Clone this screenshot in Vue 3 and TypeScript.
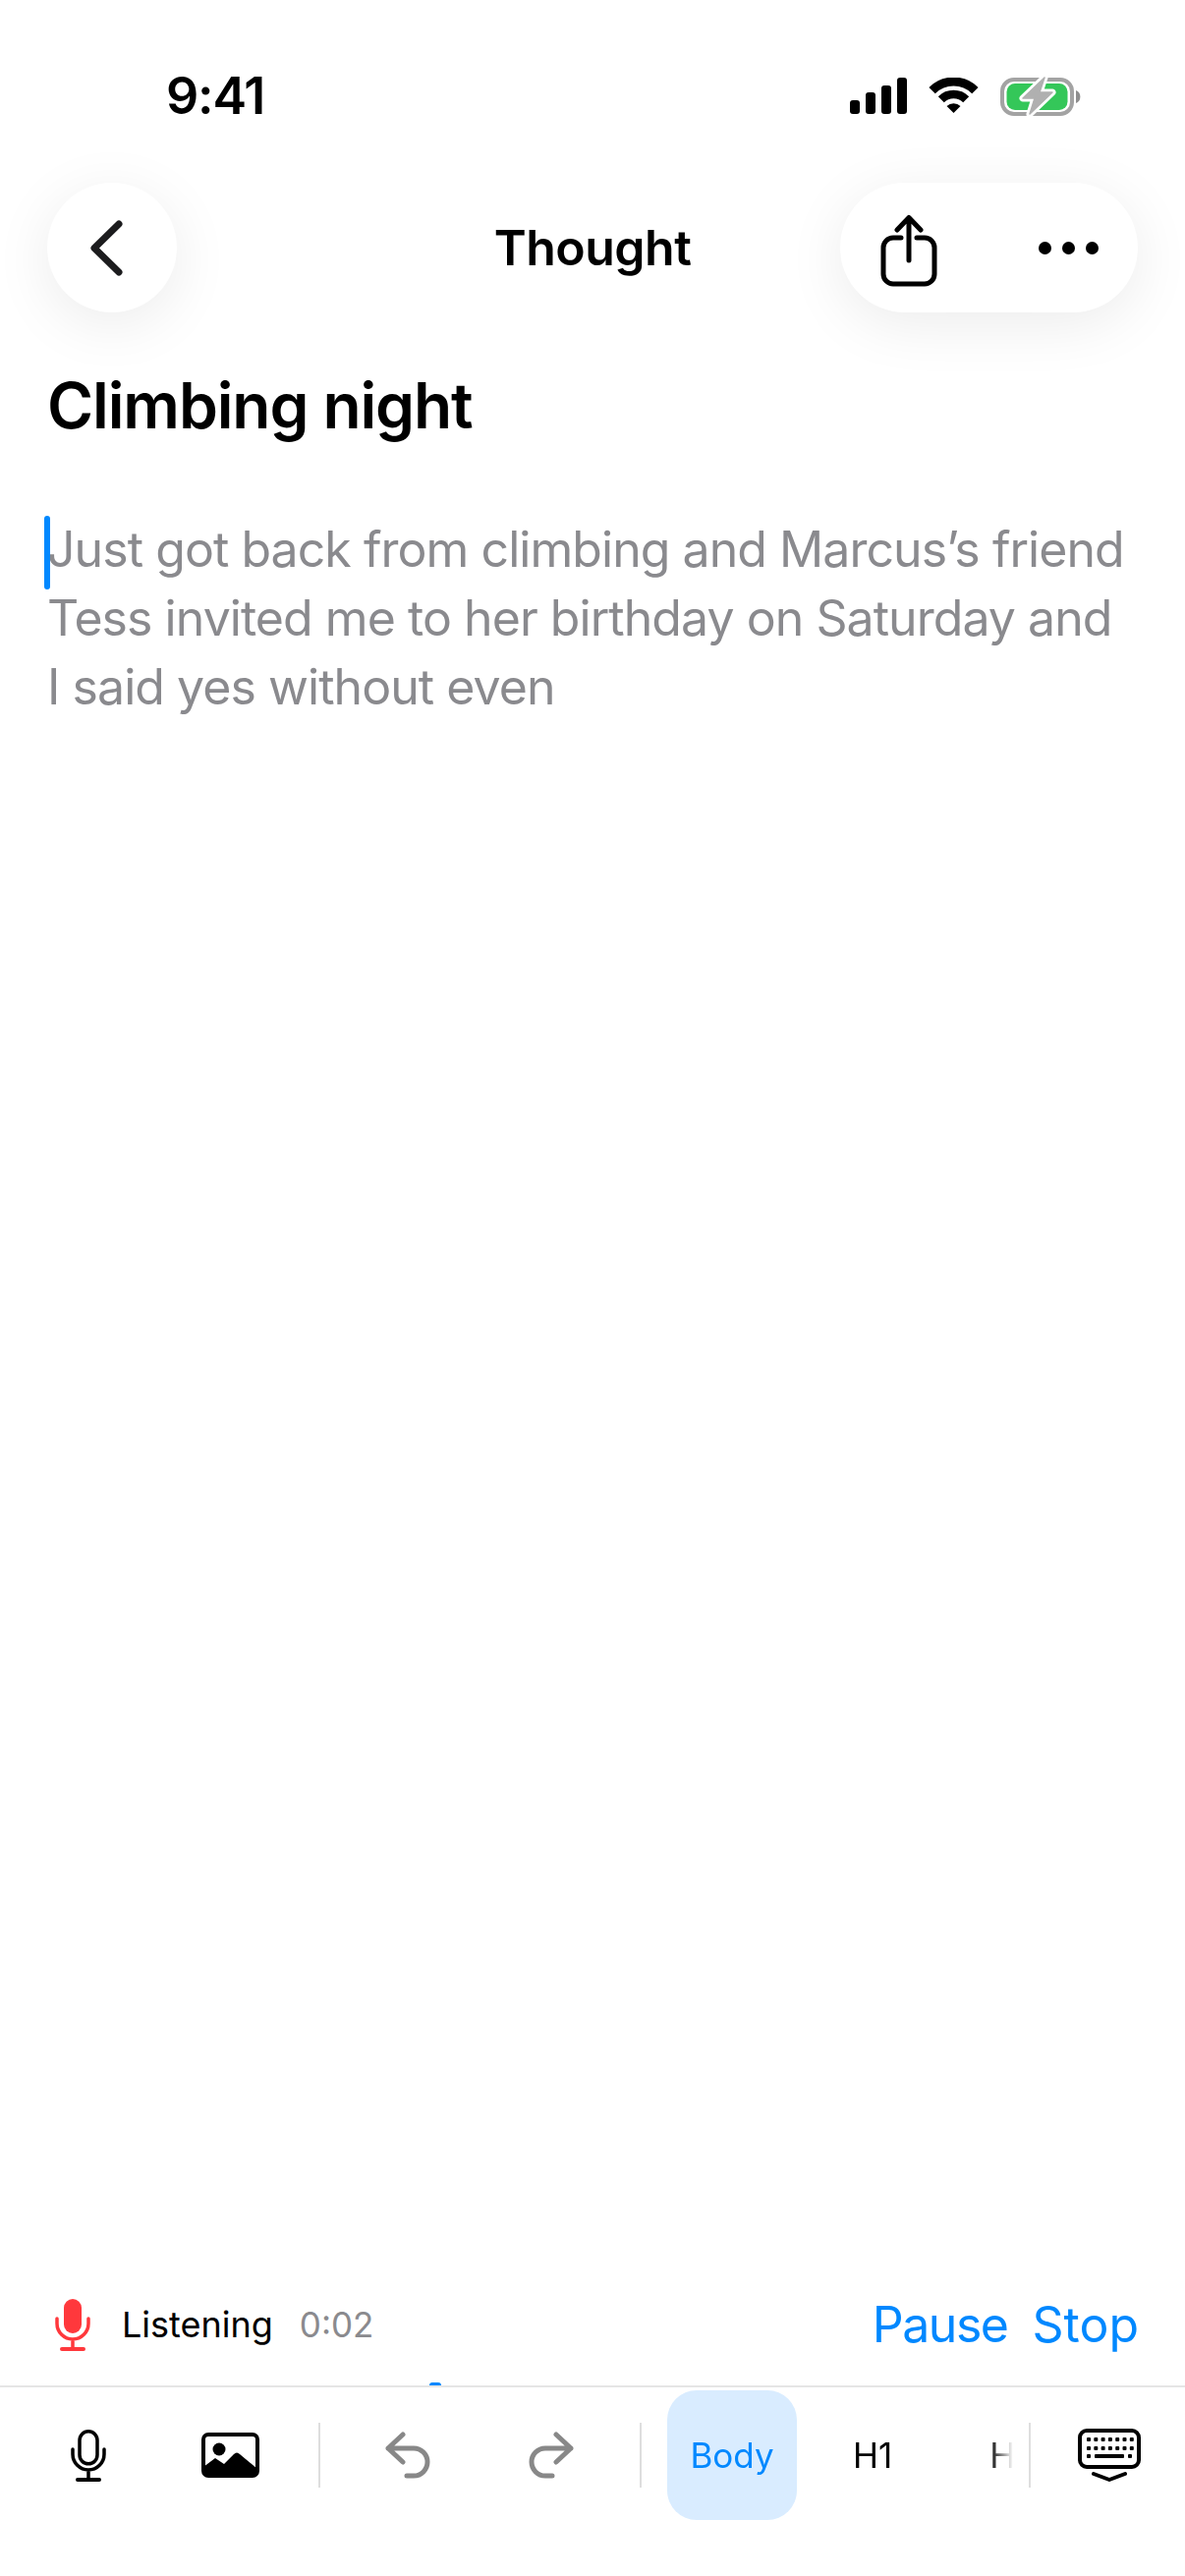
<template>
  <div class="screen">
    <!-- status bar -->
    <header class="status">
      <span class="time">9:41</span>
      <div class="status-icons">
        <svg width="58" height="37" viewBox="0 0 58 37">
          <rect x="0" y="23" width="10" height="14" rx="3" />
          <rect x="16" y="15" width="10" height="22" rx="3" />
          <rect x="32" y="8" width="10" height="29" rx="3" />
          <rect x="48" y="0" width="10" height="37" rx="3" />
        </svg>
        <svg width="51" height="37" viewBox="0 0 51 37">
          <path d="M3.6 13.1A31 31 0 0 1 47.4 13.1" fill="none" stroke="#000" stroke-width="9" />
          <path d="M12.8 22.3A18 18 0 0 1 38.2 22.3" fill="none" stroke="#000" stroke-width="8.5" />
          <path d="M25.5 36L18.5 29A10 10 0 0 1 32.5 29Z" />
        </svg>
        <svg width="84" height="42" viewBox="0 0 84 42">
          <rect x="2" y="4" width="71" height="35" rx="12" fill="none" stroke="#a3a3a3" stroke-width="4" />
          <rect x="6.500" y="8" width="62" height="27" rx="8.500" fill="#34c759" />
          <path d="M77 15a7 7 0 0 1 0 13Z" fill="#8e8e8e" />
          <path d="M45 2L23 23H35L30 39L53 17H40Z" fill="#fff" stroke="#fff" stroke-width="7" stroke-linejoin="round" />
          <path d="M45 2L23 23H35L30 39L53 17H40Z" fill="#b0b0b0" stroke="#b0b0b0" stroke-width="1.500" stroke-linejoin="round" />
        </svg>
      </div>
    </header>

    <!-- nav -->
    <nav class="nav">
      <button class="round back" aria-label="Back">
        <svg width="40" height="60" viewBox="0 0 40 60">
          <path d="M29 6L4 30.500L29 55" fill="none" stroke="#1c1c1e" stroke-width="7" stroke-linecap="round" stroke-linejoin="round" />
        </svg>
      </button>
      <h2 class="nav-title">Thought</h2>
      <div class="round actions">
        <svg width="60" height="76" viewBox="0 0 60 76">
          <path d="M22 25H14A10 10 0 0 0 4 35V62A10 10 0 0 0 14 72H46A10 10 0 0 0 56 62V35A10 10 0 0 0 46 25H38" fill="none" stroke="#000" stroke-width="5" stroke-linecap="round" />
          <path d="M30 5V48M18 17L30 4.500L42 17" fill="none" stroke="#000" stroke-width="5" stroke-linecap="round" stroke-linejoin="round" />
        </svg>
        <div class="dots"><i></i><i></i><i></i></div>
      </div>
    </nav>

    <main class="note">
      <h1 class="title">Climbing night</h1>
      <p class="body-text"><span class="caret"></span>Just got back from climbing and Marcus’s friend<br />Tess invited me to her birthday on Saturday and<br />I said yes without even</p>
    </main>

    <!-- dictation bar -->
    <section class="listen">
      <svg width="36" height="53" viewBox="0 0 36 53">
        <rect x="9" y="0" width="18" height="35" rx="9" fill="#ff383c" />
        <path d="M2 20V25A16 16 0 0 0 34 25V20M18 41V50" fill="none" stroke="#ff383c" stroke-width="3.500" stroke-linecap="round" />
        <rect x="5" y="49" width="26" height="4" rx="2" fill="#ff383c" />
      </svg>
      <span class="listen-label">Listening</span>
      <span class="listen-time">0:02</span>
      <span class="link pause">Pause</span>
      <span class="link">Stop</span>
    </section>

    <!-- format toolbar -->
    <footer class="toolbar">
      <span class="speck"></span>
      <button class="cell" aria-label="Dictate">
        <svg width="36" height="53" viewBox="0 0 36 53">
          <rect x="9" y="1.800" width="18" height="33" rx="9" fill="none" stroke="#000" stroke-width="3.500" />
          <path d="M2 20V25A16 16 0 0 0 34 25V20M18 41V50" fill="none" stroke="#000" stroke-width="3.500" stroke-linecap="round" />
          <rect x="5" y="49" width="26" height="4" rx="2" />
        </svg>
      </button>
      <button class="cell" aria-label="Image">
        <svg width="59" height="46" viewBox="0 0 59 46">
          <rect x="2" y="2" width="55" height="42" rx="5" fill="#fff" stroke="#000" stroke-width="4" />
          <circle cx="18" cy="17" r="6.500" />
          <path d="M2 35L14 26L23 32L33 22Q36 19 39 22L57 37V40Q57 45 52 45H7Q2 45 2 40Z" />
        </svg>
      </button>
      <span class="rule first"></span>
      <button class="cell" aria-label="Undo">
        <svg width="48" height="48" viewBox="0 0 48 48">
          <path d="M18 3L3 17L18 31M3 17H29A14 14 0 0 1 29 45H22" fill="none" stroke="#888" stroke-width="5" stroke-linecap="round" stroke-linejoin="round" />
        </svg>
      </button>
      <button class="cell" aria-label="Redo">
        <svg width="48" height="48" viewBox="0 0 48 48">
          <path d="M30 3L45 17L30 31M45 17H19A14 14 0 0 0 19 45H26" fill="none" stroke="#888" stroke-width="5" stroke-linecap="round" stroke-linejoin="round" />
        </svg>
      </button>
      <span class="rule mid"></span>
      <div class="styles">
        <button class="cell chip active">Body</button>
        <button class="cell chip">H1</button>
        <button class="cell chip">H2</button>
      </div>
      <span class="rule last"></span>
      <button class="cell" aria-label="Hide keyboard">
        <svg width="64" height="54" viewBox="0 0 64 54">
          <rect x="2" y="2" width="60" height="37" rx="7" fill="none" stroke="#000" stroke-width="4" />
          <rect v-for="k in keys" :key="k.x + '-' + k.y" :x="k.x" :y="k.y" :width="k.w" height="4" rx="1" />
          <path d="M16 46L32 52L48 46" fill="none" stroke="#000" stroke-width="4" stroke-linecap="round" stroke-linejoin="round" />
        </svg>
      </button>
    </footer>
  </div>
</template>

<script setup lang="ts">
interface Key {
  x: number
  y: number
  w: number
}

const keys: Key[] = []
for (let i = 0; i < 7; i++) {
  keys.push({ x: 9 + i * 7.300, y: 9, w: 4 })
}
for (let i = 0; i < 7; i++) {
  keys.push({ x: 9 + i * 7.300, y: 18, w: 4 })
}
keys.push({ x: 9, y: 26, w: 4 }, { x: 17, y: 26, w: 30 }, { x: 51, y: 26, w: 4 })
</script>

<style>
html,
body {
  margin: 0;
  background: #fff;
}
</style>

<style scoped>
.screen {
  width: 1206px;
  height: 2622px;
  display: flex;
  flex-direction: column;
  background: #fff;
  color: #000;
  font-family: Inter, "Liberation Sans", sans-serif;
  overflow: hidden;
}

button {
  appearance: none;
  border: 0;
  padding: 0;
  background: transparent;
  font: inherit;
  color: inherit;
}

/* status bar */
.status {
  height: 186px;
  box-sizing: border-box;
  padding: 68px 104px 0 169px;
  display: flex;
  justify-content: space-between;
  align-items: flex-start;
}
.time {
  font-size: 52px;
  line-height: 60px;
  font-weight: 600;
  letter-spacing: -1.200px;
}
.status-icons {
  display: flex;
  align-items: flex-start;
  gap: 22px;
  padding-top: 11px;
}
.status-icons svg:last-child {
  margin-top: -2px;
}

/* nav */
.nav {
  height: 132px;
  padding: 0 48px;
  display: grid;
  grid-template-columns: 1fr auto 1fr;
  align-items: center;
}
.round {
  height: 132px;
  background: #fff;
  border-radius: 66px;
  box-shadow: 0 12px 60px rgba(0, 0, 0, 0.08);
  display: flex;
  align-items: center;
}
.back {
  width: 132px;
  justify-content: center;
}
.back svg {
  margin-right: 4px;
}
.actions {
  justify-self: end;
  width: 303px;
  box-sizing: border-box;
  padding: 0 40px;
  justify-content: space-between;
}
.actions svg {
  margin-top: 6px;
}
.dots {
  display: flex;
  gap: 11px;
}
.dots i {
  width: 13px;
  height: 13px;
  border-radius: 50%;
  background: #000;
}
.nav-title {
  margin: 0;
  font-size: 50px;
  line-height: 60px;
  font-weight: 600;
  letter-spacing: -0.500px;
}

/* note */
.note {
  flex: 1;
  padding: 0 48px;
}
.title {
  margin: 57px 0 0;
  font-size: 64px;
  line-height: 76px;
  font-weight: 600;
  letter-spacing: -1.100px;
  position: relative;
  z-index: 1;
}
.body-text {
  margin: 73px 0 0;
  font-size: 50px;
  line-height: 70px;
  letter-spacing: -0.950px;
  white-space: nowrap;
  color: #8a8a8e;
  position: relative;
}
.caret {
  position: absolute;
  left: -3px;
  top: 1px;
  width: 6px;
  height: 75px;
  border-radius: 3px;
  background: #0088ff;
}

/* dictation */
.listen {
  height: 96px;
  padding: 0 47px 14px 56px;
  display: flex;
  align-items: center;
}
.listen-label {
  font-size: 36px;
  margin-left: 32px;
}
.listen-time {
  margin-left: 27px;
  font-size: 35px;
  color: #8a8a8e;
}
.link {
  font-size: 50px;
  color: #0088ff;
}
.pause {
  margin-left: auto;
  margin-right: 25px;
  letter-spacing: -1.500px;
}

/* toolbar */
.toolbar {
  position: relative;
  border-top: 2px solid #e5e5e5;
  height: 189px;
  padding: 3px 12px 0 24px;
  display: flex;
  align-items: flex-start;
  gap: 12px;
}
.speck {
  position: absolute;
  left: 437px;
  top: -5px;
  width: 12px;
  height: 3px;
  border-radius: 6px 6px 0 0;
  background: #0088ff;
}
.cell {
  flex: none;
  width: 132px;
  height: 132px;
  display: flex;
  align-items: center;
  justify-content: center;
}
.rule {
  flex: none;
  width: 2px;
  height: 66px;
  margin: 33px 12px 0;
  background: #dedede;
}
.rule.mid {
  margin: 33px 14px 0 13px;
}
.rule.last {
  margin: 33px 2px 0 4px;
}
.styles {
  flex: none;
  width: 352px;
  display: flex;
  gap: 11px;
  overflow: hidden;
  -webkit-mask-image: linear-gradient(to right, #000 calc(100% - 24px), transparent);
  mask-image: linear-gradient(to right, #000 calc(100% - 24px), transparent);
}
.chip {
  font-size: 35px;
}
.active {
  background: #d9ecff;
  color: #0088ff;
  border-radius: 30px;
}
</style>
